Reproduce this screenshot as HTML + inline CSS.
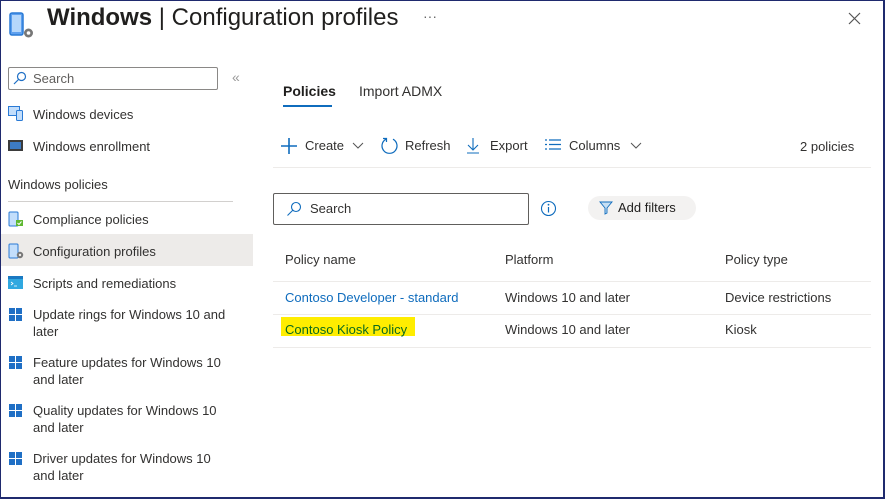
<!DOCTYPE html>
<html><head><style>
*{margin:0;padding:0;box-sizing:border-box}
body{width:885px;height:499px;background:#fff;font-family:"Liberation Sans",sans-serif;color:#323130;position:relative;overflow:hidden}
.frame{position:absolute;left:0;top:0;width:885px;height:499px;border:1px solid #1f2a6e;border-right-width:2px;border-bottom-width:2px;pointer-events:none}
.a{position:absolute;white-space:nowrap}
.t13{font-size:13px}
.nav{position:absolute;left:33px;font-size:13px;line-height:17px}
.ic{position:absolute;left:8px}
.win{position:absolute;left:9px;width:14px;height:14px}
.win i{position:absolute;width:6px;height:6px;background:#1f6fc5}
.hl{position:absolute;height:1px;background:#e1dfdd}
</style></head><body>
<svg class="a" style="left:9px;top:10px" width="28" height="32" viewBox="0 0 28 32">
<rect x="1" y="3" width="13" height="22" rx="2" fill="#5ea0ef" stroke="#2a7ad5" stroke-width="1.5"/>
<rect x="3" y="5" width="9" height="17" fill="#b5d7fb"/>
<circle cx="19.5" cy="23" r="4.5" fill="#777"/><circle cx="19.5" cy="23" r="1.8" fill="#fff"/>
</svg>
<div class="a" style="left:47px;top:4px;font-size:24px;color:#201f1e"><b style="font-weight:600">Windows</b> | Configuration profiles</div>
<div class="a" style="left:423px;top:8px;font-size:14px;color:#666">···</div>
<svg class="a" style="left:848px;top:12px" width="13" height="13"><path d="M1 1L12 12M12 1L1 12" stroke="#555" stroke-width="1.2"/></svg>

<div class="a" style="left:8px;top:67px;width:210px;height:23px;border:1px solid #8a8886;border-radius:2px"></div>
<svg class="a" style="left:13px;top:71px" width="14" height="14"><circle cx="8.5" cy="5.5" r="4" fill="none" stroke="#1f6fc5" stroke-width="1.2"/><path d="M5.5 8.5L1 13" stroke="#1f6fc5" stroke-width="1.2"/></svg>
<div class="a t13" style="left:33px;top:71px;color:#605e5c">Search</div>
<div class="a" style="left:232px;top:69px;font-size:14px;color:#999">«</div>

<svg class="ic" style="top:106px" width="16" height="16"><rect x="0.5" y="0.5" width="11" height="9" fill="#c3defb" stroke="#2a7ad5"/><rect x="8.5" y="4.5" width="6" height="10" rx="1" fill="#c3defb" stroke="#2a7ad5"/></svg>
<div class="nav" style="top:106px">Windows devices</div>
<svg class="ic" style="top:139px" width="16" height="14"><rect x="0" y="1" width="15" height="11" fill="#3b3b3b"/><rect x="2" y="3" width="11" height="7" fill="#3d7bc4"/></svg>
<div class="nav" style="top:138px">Windows enrollment</div>
<div class="a t13" style="left:8px;top:177px;color:#323130">Windows policies</div>
<div class="hl" style="left:8px;top:201px;width:225px;background:#d2d0ce"></div>

<svg class="ic" style="top:211px" width="16" height="16"><rect x="1" y="1" width="9" height="14" rx="1" fill="#c3defb" stroke="#2a7ad5"/><rect x="8" y="9" width="7" height="6" fill="#5fb832"/><path d="M9.5 12l1.5 1.5 2.5-3" stroke="#fff" fill="none"/></svg>
<div class="nav" style="top:211px">Compliance policies</div>
<div class="a" style="left:1px;top:234px;width:252px;height:32px;background:#edebe9"></div>
<svg class="ic" style="top:243px" width="16" height="16"><rect x="1" y="1" width="9" height="14" rx="1" fill="#c3defb" stroke="#2a7ad5"/><circle cx="12" cy="12" r="3.2" fill="#777"/><circle cx="12" cy="12" r="1.2" fill="#edebe9"/></svg>
<div class="nav" style="top:243px">Configuration profiles</div>
<svg class="ic" style="top:276px" width="16" height="14"><rect x="0" y="0" width="15" height="13" fill="#30a8e0"/><rect x="0" y="0" width="15" height="3" fill="#1a79c2"/><path d="M3 6l2 1.5-2 1.5M6 10h3" stroke="#fff" fill="none" stroke-width="0.8"/></svg>
<div class="nav" style="top:275px">Scripts and remediations</div>

<div class="win" style="top:308px"><i style="left:0;top:0"></i><i style="left:7px;top:0"></i><i style="left:0;top:7px"></i><i style="left:7px;top:7px"></i></div>
<div class="nav" style="top:306px">Update rings for Windows 10 and<br>later</div>
<div class="win" style="top:356px"><i style="left:0;top:0"></i><i style="left:7px;top:0"></i><i style="left:0;top:7px"></i><i style="left:7px;top:7px"></i></div>
<div class="nav" style="top:354px">Feature updates for Windows 10<br>and later</div>
<div class="win" style="top:404px"><i style="left:0;top:0"></i><i style="left:7px;top:0"></i><i style="left:0;top:7px"></i><i style="left:7px;top:7px"></i></div>
<div class="nav" style="top:402px">Quality updates for Windows 10<br>and later</div>
<div class="win" style="top:452px"><i style="left:0;top:0"></i><i style="left:7px;top:0"></i><i style="left:0;top:7px"></i><i style="left:7px;top:7px"></i></div>
<div class="nav" style="top:450px">Driver updates for Windows 10<br>and later</div>

<div class="a" style="left:283px;top:83px;font-size:14px;font-weight:bold;color:#201f1e">Policies</div>
<div class="a" style="left:283px;top:105px;width:49px;height:2px;background:#0f6cbd"></div>
<div class="a" style="left:359px;top:83px;font-size:14px;color:#323130">Import ADMX</div>

<svg class="a" style="left:280px;top:137px" width="18" height="18"><path d="M9 1v16M1 9h16" stroke="#0f6cbd" stroke-width="1.6"/></svg>
<div class="a t13" style="left:305px;top:138px">Create</div>
<svg class="a" style="left:352px;top:142px" width="12" height="8"><path d="M1 1l5 5 5-5" stroke="#555" fill="none"/></svg>
<svg class="a" style="left:380px;top:136px" width="19" height="19"><path d="M13 3.2A7.5 7.5 0 1 1 6 3.2M3 2.5h3.5v3.5" stroke="#0f6cbd" fill="none" stroke-width="1.2"/></svg>
<div class="a t13" style="left:405px;top:138px">Refresh</div>
<svg class="a" style="left:466px;top:137px" width="14" height="17"><path d="M7 1v12M2 8l5 5 5-5M1 16h12" stroke="#0f6cbd" fill="none" stroke-width="1.1"/></svg>
<div class="a t13" style="left:490px;top:138px">Export</div>
<svg class="a" style="left:545px;top:139px" width="17" height="12"><path d="M0 1h2M4 1h12M0 5.5h2M4 5.5h12M0 10h2M4 10h12" stroke="#0f6cbd" stroke-width="1.3"/></svg>
<div class="a t13" style="left:569px;top:138px">Columns</div>
<svg class="a" style="left:630px;top:142px" width="12" height="8"><path d="M1 1l5 5 5-5" stroke="#555" fill="none"/></svg>
<div class="a t13" style="left:800px;top:139px">2 policies</div>
<div class="hl" style="left:273px;top:167px;width:598px;background:#edebe9"></div>

<div class="a" style="left:273px;top:193px;width:256px;height:32px;border:1px solid #605e5c;border-radius:2px"></div>
<svg class="a" style="left:286px;top:201px" width="16" height="16"><circle cx="10" cy="6" r="4.5" fill="none" stroke="#0f6cbd" stroke-width="1.1"/><path d="M7 9L1.5 14.5" stroke="#0f6cbd" stroke-width="1.1"/></svg>
<div class="a t13" style="left:310px;top:201px;color:#323130">Search</div>
<svg class="a" style="left:540px;top:200px" width="17" height="17"><circle cx="8.5" cy="8.5" r="7" fill="none" stroke="#0f6cbd" stroke-width="1.1"/><path d="M8.5 7v5.5" stroke="#0f6cbd" stroke-width="1.2"/><circle cx="8.5" cy="4.7" r="0.9" fill="#0f6cbd"/></svg>
<div class="a" style="left:588px;top:196px;width:108px;height:24px;border-radius:12px;background:#f3f2f1"></div>
<svg class="a" style="left:599px;top:201px" width="14" height="14"><path d="M1 1h12l-5 6v5l-2 1V7z" fill="#c7e0f4" stroke="#0f6cbd" stroke-width="0.9"/></svg>
<div class="a t13" style="left:618px;top:200px;color:#201f1e">Add filters</div>

<div class="a t13" style="left:285px;top:252px">Policy name</div>
<div class="a t13" style="left:505px;top:252px">Platform</div>
<div class="a t13" style="left:725px;top:252px">Policy type</div>
<div class="hl" style="left:273px;top:281px;width:598px;background:#edebe9"></div>
<div class="a t13" style="left:285px;top:290px;color:#0f6cbd">Contoso Developer - standard</div>
<div class="a t13" style="left:505px;top:290px">Windows 10 and later</div>
<div class="a t13" style="left:725px;top:290px">Device restrictions</div>
<div class="hl" style="left:273px;top:314px;width:598px;background:#edebe9"></div>
<div class="a" style="left:281px;top:317px;width:134px;height:19px;background:#ffed00"></div>
<div class="a t13" style="left:285px;top:322px;color:#0b6a1e">Contoso Kiosk Policy</div>
<div class="a t13" style="left:505px;top:322px">Windows 10 and later</div>
<div class="a t13" style="left:725px;top:322px">Kiosk</div>
<div class="hl" style="left:273px;top:347px;width:598px;background:#edebe9"></div>

<div class="frame"></div>
</body></html>
